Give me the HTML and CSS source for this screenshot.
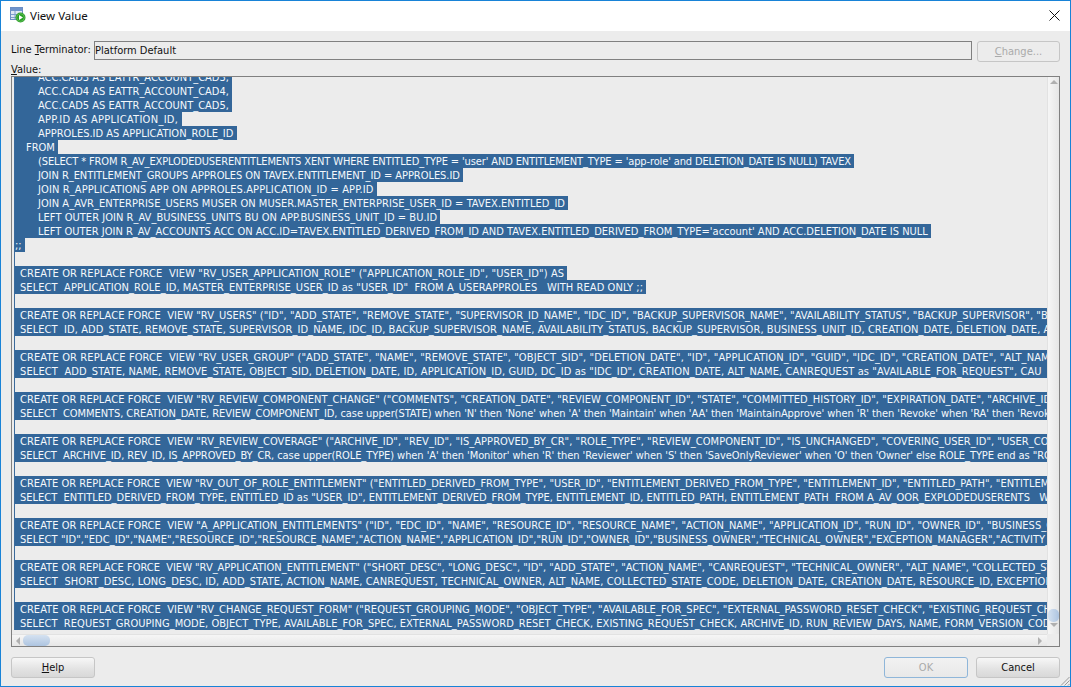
FILE: index.html
```html
<!DOCTYPE html>
<html lang="en">
<head>
  <meta charset="UTF-8">
  <title>View Value</title>
  <link rel="stylesheet" href="styles.css">
</head>
<body>
  <div class="dialog">
    <div class="title-bar">
      <svg class="app-icon" width="16" height="16" viewBox="0 0 16 16">
        <rect x="0.5" y="0.5" width="12" height="12" fill="#dfe8f5" stroke="#6d8fc4"/>
        <rect x="1" y="1" width="11" height="3" fill="#6f94cc"/>
        <path d="M1 7.5h11M1 10.5h11M5 4v8" stroke="#7f9fce" fill="none"/>
        <circle cx="10.5" cy="10.5" r="5" fill="#2f9e2f"/>
        <circle cx="10.5" cy="10.5" r="3.8" fill="#25a025" stroke="#7dce6a" stroke-width="0.6"/>
        <path d="M9 8l4 2.5-4 2.5z" fill="#fff"/>
      </svg>
      <span class="title-text">View Value</span>
      <svg class="close-icon" width="11" height="11" viewBox="0 0 11 11">
        <path d="M0.5 0.5l10 10M10.5 0.5l-10 10" stroke="#111" fill="none"/>
      </svg>
    </div>
    <div class="content">
      <div class="term-row">
        <label class="term-label">Line <u>T</u>erminator:</label>
        <div class="term-field">Platform Default</div>
        <button class="btn btn-change"><u>C</u>hange...</button>
      </div>
      <label class="value-label"><u>V</u>alue:</label>
      <div class="editor">
        <div class="viewport">
          <div class="code">
            <div class="ln"><span class="i2">ACC.CAD3 AS EATTR_ACCOUNT_CAD3, </span></div>
            <div class="ln"><span class="i2">ACC.CAD4 AS EATTR_ACCOUNT_CAD4, </span></div>
            <div class="ln"><span class="i2">ACC.CAD5 AS EATTR_ACCOUNT_CAD5, </span></div>
            <div class="ln"><span class="i2 wide-4">APP.ID AS APPLICATION_ID, </span></div>
            <div class="ln"><span class="i2">APPROLES.ID AS APPLICATION_ROLE_ID </span></div>
            <div class="ln"><span class="i1">FROM </span></div>
            <div class="ln"><span class="i2 tight-3">(SELECT * FROM R_AV_EXPLODEDUSERENTITLEMENTS XENT WHERE ENTITLED_TYPE = 'user' AND ENTITLEMENT_TYPE = 'app-role' and DELETION_DATE IS NULL) TAVEX </span></div>
            <div class="ln"><span class="i2 tight-1">JOIN R_ENTITLEMENT_GROUPS APPROLES ON TAVEX.ENTITLEMENT_ID = APPROLES.ID </span></div>
            <div class="ln"><span class="i2 wide-3">JOIN R_APPLICATIONS APP ON APPROLES.APPLICATION_ID = APP.ID </span></div>
            <div class="ln"><span class="i2 wide-1">JOIN A_AVR_ENTERPRISE_USERS MUSER ON MUSER.MASTER_ENTERPRISE_USER_ID = TAVEX.ENTITLED_ID </span></div>
            <div class="ln"><span class="i2 wide-1">LEFT OUTER JOIN R_AV_BUSINESS_UNITS BU ON APP.BUSINESS_UNIT_ID = BU.ID </span></div>
            <div class="ln"><span class="i2">LEFT OUTER JOIN R_AV_ACCOUNTS ACC ON ACC.ID=TAVEX.ENTITLED_DERIVED_FROM_ID AND TAVEX.ENTITLED_DERIVED_FROM_TYPE='account' AND ACC.DELETION_DATE IS NULL </span></div>
            <div class="ln"><span>;; </span></div>
            <div class="ln"></div>
            <div class="ln"><span class="i0 wide-3">CREATE OR REPLACE FORCE  VIEW "RV_USER_APPLICATION_ROLE" ("APPLICATION_ROLE_ID", "USER_ID") AS </span></div>
            <div class="ln"><span class="i0 wide-2">SELECT  APPLICATION_ROLE_ID, MASTER_ENTERPRISE_USER_ID as "USER_ID"  FROM A_USERAPPROLES   WITH READ ONLY ;; </span></div>
            <div class="ln"></div>
            <div class="ln"><span class="i0 wide-1">CREATE OR REPLACE FORCE  VIEW "RV_USERS" ("ID", "ADD_STATE", "REMOVE_STATE", "SUPERVISOR_ID_NAME", "IDC_ID", "BACKUP_SUPERVISOR_NAME", "AVAILABILITY_STATUS", "BACKUP_SUPERVISOR", "BUSINESS_UNIT_ID", "CREATION_DATE"</span></div>
            <div class="ln"><span class="i0 wide-2">SELECT  ID, ADD_STATE, REMOVE_STATE, SUPERVISOR_ID_NAME, IDC_ID, BACKUP_SUPERVISOR_NAME, AVAILABILITY_STATUS, BACKUP_SUPERVISOR, BUSINESS_UNIT_ID, CREATION_DATE, DELETION_DATE, ALT_NAME, STATE_CODE</span></div>
            <div class="ln"></div>
            <div class="ln"><span class="i0 wide-3">CREATE OR REPLACE FORCE  VIEW "RV_USER_GROUP" ("ADD_STATE", "NAME", "REMOVE_STATE", "OBJECT_SID", "DELETION_DATE", "ID", "APPLICATION_ID", "GUID", "IDC_ID", "CREATION_DATE", "ALT_NAME", "AVAILABLE_FOR_REQUEST", "CAUSE"</span></div>
            <div class="ln"><span class="i0 wide-3">SELECT  ADD_STATE, NAME, REMOVE_STATE, OBJECT_SID, DELETION_DATE, ID, APPLICATION_ID, GUID, DC_ID as "IDC_ID", CREATION_DATE, ALT_NAME, CANREQUEST as "AVAILABLE_FOR_REQUEST", CAU  </span></div>
            <div class="ln"></div>
            <div class="ln"><span class="i0 wide-1">CREATE OR REPLACE FORCE  VIEW "RV_REVIEW_COMPONENT_CHANGE" ("COMMENTS", "CREATION_DATE", "REVIEW_COMPONENT_ID", "STATE", "COMMITTED_HISTORY_ID", "EXPIRATION_DATE", "ARCHIVE_ID", "REV_ID", "CHANGE_TYPE"</span></div>
            <div class="ln"><span class="i0 tight-2">SELECT  COMMENTS, CREATION_DATE, REVIEW_COMPONENT_ID, case upper(STATE) when 'N' then 'None' when 'A' then 'Maintain' when 'AA' then 'MaintainApprove' when 'R' then 'Revoke' when 'RA' then 'RevokeApprove' else STATE end</span></div>
            <div class="ln"></div>
            <div class="ln"><span class="i0 wide-1">CREATE OR REPLACE FORCE  VIEW "RV_REVIEW_COVERAGE" ("ARCHIVE_ID", "REV_ID", "IS_APPROVED_BY_CR", "ROLE_TYPE", "REVIEW_COMPONENT_ID", "IS_UNCHANGED", "COVERING_USER_ID", "USER_COVERED_ID", "ROLE_NAME"</span></div>
            <div class="ln"><span class="i0 tight-2">SELECT  ARCHIVE_ID, REV_ID, IS_APPROVED_BY_CR, case upper(ROLE_TYPE) when 'A' then 'Monitor' when 'R' then 'Reviewer' when 'S' then 'SaveOnlyReviewer' when 'O' then 'Owner' else ROLE_TYPE end as "ROLE_TYPE", REVIEW</span></div>
            <div class="ln"></div>
            <div class="ln"><span class="i0">CREATE OR REPLACE FORCE  VIEW "RV_OUT_OF_ROLE_ENTITLEMENT" ("ENTITLED_DERIVED_FROM_TYPE", "USER_ID", "ENTITLEMENT_DERIVED_FROM_TYPE", "ENTITLEMENT_ID", "ENTITLED_PATH", "ENTITLEMENT_PATH") AS</span></div>
            <div class="ln"><span class="i0">SELECT  ENTITLED_DERIVED_FROM_TYPE, ENTITLED_ID as "USER_ID", ENTITLEMENT_DERIVED_FROM_TYPE, ENTITLEMENT_ID, ENTITLED_PATH, ENTITLEMENT_PATH  FROM A_AV_OOR_EXPLODEDUSERENTS   WITH READ ONLY ;;</span></div>
            <div class="ln"></div>
            <div class="ln"><span class="i0 wide-1">CREATE OR REPLACE FORCE  VIEW "A_APPLICATION_ENTITLEMENTS" ("ID", "EDC_ID", "NAME", "RESOURCE_ID", "RESOURCE_NAME", "ACTION_NAME", "APPLICATION_ID", "RUN_ID", "OWNER_ID", "BUSINESS_OWNER", "TECHNICAL_OWNER"</span></div>
            <div class="ln"><span class="i0 wide-2">SELECT "ID","EDC_ID","NAME","RESOURCE_ID","RESOURCE_NAME","ACTION_NAME","APPLICATION_ID","RUN_ID","OWNER_ID","BUSINESS_OWNER","TECHNICAL_OWNER","EXCEPTION_MANAGER","ACTIVITY_DATE","CREATION_DATE"</span></div>
            <div class="ln"></div>
            <div class="ln"><span class="i0">CREATE OR REPLACE FORCE  VIEW "RV_APPLICATION_ENTITLEMENT" ("SHORT_DESC", "LONG_DESC", "ID", "ADD_STATE", "ACTION_NAME", "CANREQUEST", "TECHNICAL_OWNER", "ALT_NAME", "COLLECTED_STATE_CODE", "DELETION_DATE"</span></div>
            <div class="ln"><span class="i0 wide-3">SELECT  SHORT_DESC, LONG_DESC, ID, ADD_STATE, ACTION_NAME, CANREQUEST, TECHNICAL_OWNER, ALT_NAME, COLLECTED_STATE_CODE, DELETION_DATE, CREATION_DATE, RESOURCE_ID, EXCEPTION_MANAGER, ACTIVITY_DATE</span></div>
            <div class="ln"></div>
            <div class="ln"><span class="i0 wide-1">CREATE OR REPLACE FORCE  VIEW "RV_CHANGE_REQUEST_FORM" ("REQUEST_GROUPING_MODE", "OBJECT_TYPE", "AVAILABLE_FOR_SPEC", "EXTERNAL_PASSWORD_RESET_CHECK", "EXISTING_REQUEST_CHECK", "ARCHIVE_ID", "RUN_REVIEW_DAYS"</span></div>
            <div class="ln"><span class="i0 wide-1">SELECT  REQUEST_GROUPING_MODE, OBJECT_TYPE, AVAILABLE_FOR_SPEC, EXTERNAL_PASSWORD_RESET_CHECK, EXISTING_REQUEST_CHECK, ARCHIVE_ID, RUN_REVIEW_DAYS, NAME, FORM_VERSION_CODE, FORM_TYPE, CREATION_DATE</span></div>
          </div>
        </div>
        <div class="vscroll">
          <div class="arrow-up"></div>
          <div class="v-thumb"></div>
          <div class="arrow-down"></div>
        </div>
        <div class="hscroll">
          <div class="arrow-left"></div>
          <div class="h-thumb"></div>
          <div class="arrow-right"></div>
        </div>
        <div class="corner"></div>
      </div>
      <div class="footer">
        <button class="btn"><u>H</u>elp</button>
        <div class="footer-right">
          <button class="btn btn-ok">OK</button>
          <button class="btn">Cancel</button>
        </div>
      </div>
    </div>
    <svg class="grip" width="11" height="11" viewBox="0 0 11 11">
      <path d="M10.5 2L2 10.5M10.5 5.5L5.5 10.5M10.5 9L9 10.5" stroke="#9a9a9a" fill="none"/>
    </svg>
  </div>
</body>
</html>
```

FILE: styles.css
```css
html, body {
  margin: 0;
  padding: 0;
  height: 100%;
  overflow: hidden;
}
body {
  font-family: "DejaVu Sans", "Noto Sans", sans-serif;
  font-stretch: condensed;
  font-size: 11px;
  color: #111;
  background: #ececec;
}
.dialog {
  position: relative;
  box-sizing: border-box;
  width: 1071px;
  height: 687px;
  border: 1px solid #1883d7;
  display: flex;
  flex-direction: column;
  background: #ececec;
}
.title-bar {
  box-sizing: border-box;
  height: 30px;
  flex: none;
  background: #fff;
  display: flex;
  align-items: center;
  padding: 0 10px 2px 9px;
}
.app-icon {
  margin-right: 4px;
}
.title-text {
  font-family: "Noto Sans", sans-serif;
  font-stretch: normal;
  font-size: 11.5px;
  color: #111;
}
.close-icon {
  margin-left: auto;
}
.content {
  flex: 1;
  display: flex;
  flex-direction: column;
  padding: 10px 10px 7px 10px;
  min-height: 0;
}
.term-row {
  display: flex;
  align-items: flex-start;
  height: 21px;
}
.term-label {
  width: 83px;
  flex: none;
  line-height: 17px;
  white-space: nowrap;
}
.term-field {
  box-sizing: border-box;
  flex: 1;
  height: 19px;
  border: 1px solid #808080;
  line-height: 17px;
  background: #ececec;
}
.value-label {
  height: 14px;
  line-height: 16px;
}
.editor {
  box-sizing: border-box;
  flex: none;
  width: 1049px;
  height: 571px;
  border: 1px solid #808080;
  display: grid;
  grid-template-columns: 1fr 12px;
  grid-template-rows: 1fr 12px;
  background: #ececec;
}
.viewport {
  overflow: hidden;
  padding-left: 3px;
  min-width: 0;
  min-height: 0;
}
.code {
  margin-top: -7px;
  border-left: 1px solid #3a6a9c;
  margin-left: -1px;
}
.ln {
  height: 14px;
  line-height: 16px;
  white-space: pre;
}
.ln span {
  display: inline-block;
  height: 14px;
  background: #336699;
  color: #f4f8fc;
}
.ln .i0 { padding-left: 5px; }
.ln .i1 { padding-left: 11px; }
.ln .i2 { padding-left: 23px; }
/* fallback font runs a bit off Tahoma, nudge per line */
.tight-1 { letter-spacing: -0.05px; }
.tight-2 { letter-spacing: -0.07px; }
.tight-3 { letter-spacing: -0.13px; }
.wide-1 { letter-spacing: 0.04px; }
.wide-2 { letter-spacing: 0.07px; }
.wide-3 { letter-spacing: 0.11px; }
.wide-4 { letter-spacing: 0.3px; }
.vscroll {
  display: flex;
  flex-direction: column;
  align-items: center;
  background: linear-gradient(90deg, #f6f6f6, #e6e6e6);
  border-left: 1px solid #e2e2e2;
}
.hscroll {
  display: flex;
  align-items: center;
  padding: 0 2px 0 2px;
  background: linear-gradient(180deg, #f6f6f6, #e6e6e6);
  border-top: 1px solid #e2e2e2;
}
.corner {
  background: #ececec;
}
.arrow-up {
  width: 0;
  height: 0;
  margin-top: 3px;
  border: 4px solid transparent;
  border-top: 0;
  border-bottom: 4px solid #b0b0b0;
}
.arrow-down {
  width: 0;
  height: 0;
  margin: 1px 0 7px;
  border: 4px solid transparent;
  border-bottom: 0;
  border-top: 4px solid #b0b0b0;
}
.arrow-left {
  width: 0;
  height: 0;
  margin-left: 2px;
  border: 4px solid transparent;
  border-left: 0;
  border-right: 4px solid #b0b0b0;
}
.arrow-right {
  width: 0;
  height: 0;
  margin-left: auto;
  margin-right: 3px;
  border: 4px solid transparent;
  border-right: 0;
  border-left: 4px solid #b0b0b0;
}
.v-thumb {
  width: 11px;
  height: 13px;
  margin-top: auto;
  border-radius: 5px;
  background: linear-gradient(90deg, #d5e2f1, #adc4e0);
}
.h-thumb {
  width: 27px;
  height: 11px;
  margin-left: 3px;
  border-radius: 5px;
  background: linear-gradient(180deg, #d5e2f1, #adc4e0);
}
.btn {
  box-sizing: border-box;
  width: 84px;
  height: 21px;
  padding: 0;
  font-family: inherit;
  font-stretch: inherit;
  font-size: 11px;
  color: #111;
  border: 1px solid #c6c6c6;
  border-radius: 3px;
  background: linear-gradient(180deg, #f7f7f7, #e2e2e2 60%, #d8d8d8);
}
.btn-change {
  width: 83px;
  margin-left: 5px;
  background: #ececec;
  color: #aaa;
}
.btn-ok {
  border-color: #8fb6d9;
  color: #aaa;
  background: linear-gradient(180deg, #f2f2f2, #e8e8e8);
}
.footer {
  display: flex;
  justify-content: space-between;
  margin-top: 10px;
}
.footer-right {
  display: flex;
  gap: 8px;
}
.grip {
  position: absolute;
  right: 0;
  bottom: 0;
}
```
